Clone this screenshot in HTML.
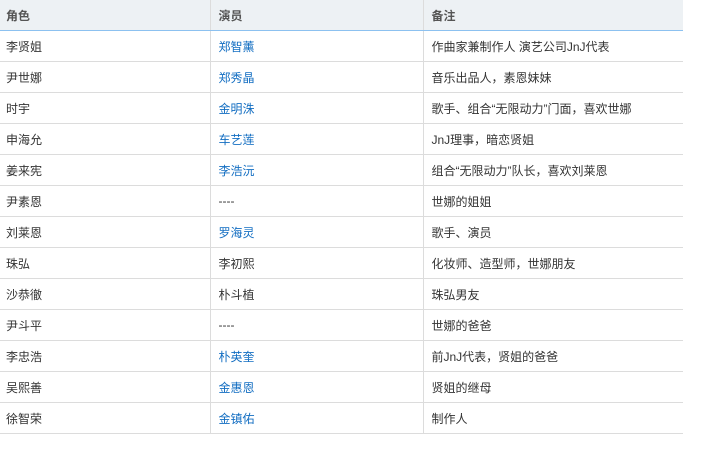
<!DOCTYPE html>
<html><head><meta charset="utf-8"><style>
body{margin:0;background:#fff;font-family:"Liberation Sans","Noto Sans CJK SC",sans-serif;font-size:12px;color:#333}
table{border-collapse:collapse;width:683px;table-layout:fixed;position:absolute;left:0;top:0}
th{height:30px;background:#edf1f4;text-align:left;padding:0 0 0 8px;font-weight:bold;color:#555;border-bottom:1px solid #8cc1f0;border-left:1px solid #dcdcdc}
td{height:30px;padding:0 0 0 8px;border-bottom:1px solid #dcdcdc;border-left:1px solid #dcdcdc}
th:first-child,td:first-child{border-left:none;padding-left:6px}
a{color:#136ec2;text-decoration:none}
</style></head><body>
<table>
<colgroup><col style="width:210px"><col style="width:213px"><col style="width:260px"></colgroup>
<tr><th>角色</th><th>演员</th><th>备注</th></tr>
<tr><td>李贤姐</td><td><a>郑智薰</a></td><td>作曲家兼制作人 演艺公司JnJ代表</td></tr>
<tr><td>尹世娜</td><td><a>郑秀晶</a></td><td>音乐出品人，素恩妹妹</td></tr>
<tr><td>时宇</td><td><a>金明洙</a></td><td>歌手、组合“无限动力”门面，喜欢世娜</td></tr>
<tr><td>申海允</td><td><a>车艺莲</a></td><td>JnJ理事，暗恋贤姐</td></tr>
<tr><td>姜来宪</td><td><a>李浩沅</a></td><td>组合“无限动力”队长，喜欢刘莱恩</td></tr>
<tr><td>尹素恩</td><td>----</td><td>世娜的姐姐</td></tr>
<tr><td>刘莱恩</td><td><a>罗海灵</a></td><td>歌手、演员</td></tr>
<tr><td>珠弘</td><td>李初熙</td><td>化妆师、造型师，世娜朋友</td></tr>
<tr><td>沙恭徹</td><td>朴斗植</td><td>珠弘男友</td></tr>
<tr><td>尹斗平</td><td>----</td><td>世娜的爸爸</td></tr>
<tr><td>李忠浩</td><td><a>朴英奎</a></td><td>前JnJ代表，贤姐的爸爸</td></tr>
<tr><td>吴熙善</td><td><a>金惠恩</a></td><td>贤姐的继母</td></tr>
<tr><td>徐智荣</td><td><a>金镇佑</a></td><td>制作人</td></tr>
</table>
</body></html>
